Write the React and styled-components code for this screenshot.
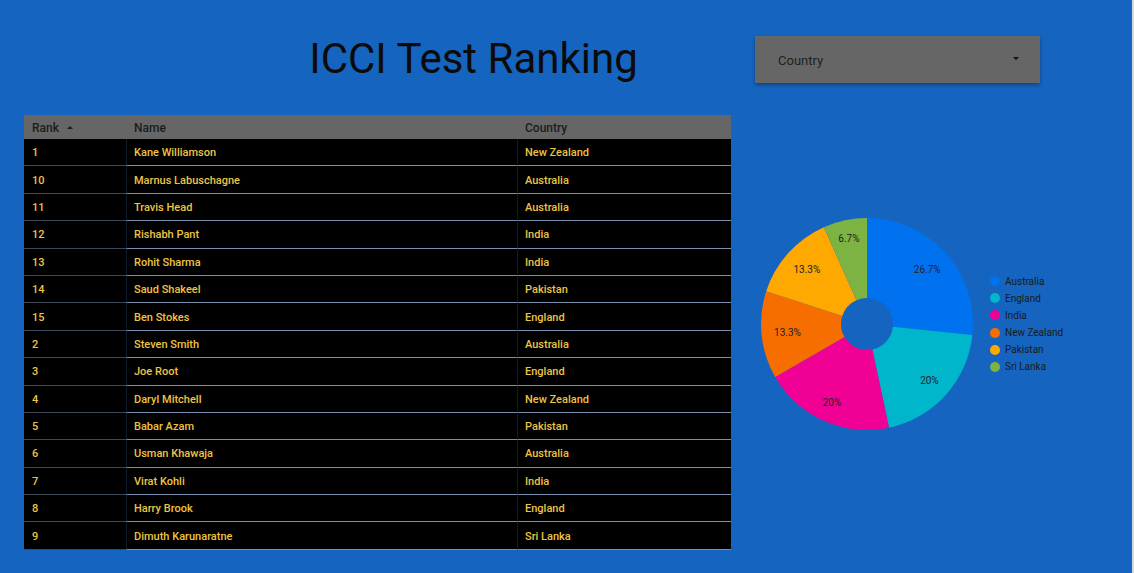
import React from 'react';
import styled, { createGlobalStyle } from 'styled-components';

const GlobalStyle = createGlobalStyle`
  html, body {
    margin: 0;
    padding: 0;
    background: #1565c0;
    font-family: Roboto, "Liberation Sans", sans-serif;
  }
`;

const Page = styled.div`
  display: flex;
  height: 573px;
  padding-left: 24px;
  box-sizing: border-box;
  background: #1565c0;
  border-right: 2px solid #d5d9df;
  overflow: hidden;
`;

const LeftColumn = styled.div`
  width: 707px;
  display: flex;
  flex-direction: column;
`;

const Title = styled.h1`
  margin: 0;
  height: 115px;
  box-sizing: border-box;
  padding: 33px 0 0 192px;
  text-align: center;
  font-size: 42px;
  line-height: 52px;
  font-weight: 400;
  color: #0b0b0b;
`;

const Table = styled.div`
  display: grid;
  grid-template-columns: 102px 391px 214px;
`;

const HeadCell = styled.div`
  height: 24px;
  box-sizing: border-box;
  padding: 1px 0 0 8px;
  background: #666666;
  color: #1c1c1c;
  font-size: 12px;
  font-weight: 500;
  display: flex;
  align-items: center;
  gap: 8px;
`;

const SortArrow = styled.span`
  width: 0;
  height: 0;
  border-left: 3px solid transparent;
  border-right: 3px solid transparent;
  border-bottom: 3px solid #1c1c1c;
  margin-top: -1px;
`;

const Cell = styled.div`
  height: 27.4px;
  box-sizing: border-box;
  background: #000;
  color: #eec443;
  font-size: 11px;
  font-weight: 500;
  padding: 1px 0 0 ${(p) => (p.$first ? '8px' : '7px')};
  display: flex;
  align-items: center;
  border-bottom: 1px solid ${(p) => (p.$first ? '#3e4a59' : '#7b90ad')};
  border-left: ${(p) => (p.$first ? 'none' : '1px solid #0f1b2b')};
`;

const RightColumn = styled.div`
  display: flex;
  flex-direction: column;
  padding-left: 24px;
`;

const Dropdown = styled.div`
  margin-top: 36px;
  width: 285px;
  height: 47px;
  background: #666666;
  box-shadow: 0 2px 4px rgba(0, 0, 0, 0.35);
  display: flex;
  align-items: center;
  justify-content: space-between;
  padding: 2px 23px 0;
  box-sizing: border-box;
  font-size: 13px;
  color: #222;
`;

const Caret = styled.span`
  width: 0;
  height: 0;
  border-left: 3px solid transparent;
  border-right: 3px solid transparent;
  border-top: 3px solid #111;
  margin-right: -2px;
  margin-top: -4px;
`;

const ChartRow = styled.div`
  margin-top: 133px;
  margin-left: 4px;
  display: flex;
  align-items: center;
  gap: 15px;
`;

const Legend = styled.ul`
  list-style: none;
  margin: 0;
  padding: 0;
  display: flex;
  flex-direction: column;
`;

const LegendItem = styled.li`
  height: 17.2px;
  display: flex;
  align-items: center;
  gap: 5px;
  font-size: 10px;
  color: #1a1a1a;
`;

const Dot = styled.span`
  width: 10px;
  height: 10px;
  border-radius: 50%;
  background: ${(p) => p.$color};
`;

const players = [
  ['1', 'Kane Williamson', 'New Zealand'],
  ['10', 'Marnus Labuschagne', 'Australia'],
  ['11', 'Travis Head', 'Australia'],
  ['12', 'Rishabh Pant', 'India'],
  ['13', 'Rohit Sharma', 'India'],
  ['14', 'Saud Shakeel', 'Pakistan'],
  ['15', 'Ben Stokes', 'England'],
  ['2', 'Steven Smith', 'Australia'],
  ['3', 'Joe Root', 'England'],
  ['4', 'Daryl Mitchell', 'New Zealand'],
  ['5', 'Babar Azam', 'Pakistan'],
  ['6', 'Usman Khawaja', 'Australia'],
  ['7', 'Virat Kohli', 'India'],
  ['8', 'Harry Brook', 'England'],
  ['9', 'Dimuth Karunaratne', 'Sri Lanka'],
];

// labelR: distance of the percentage label from the centre
const slices = [
  { name: 'Australia', value: 4, label: '26.7%', color: '#0072f0', labelR: 81 },
  { name: 'England', value: 3, label: '20%', color: '#00b6cb', labelR: 84 },
  { name: 'India', value: 3, label: '20%', color: '#f10096', labelR: 86 },
  { name: 'New Zealand', value: 2, label: '13.3%', color: '#f66d00', labelR: 80 },
  { name: 'Pakistan', value: 2, label: '13.3%', color: '#ffa800', labelR: 81 },
  { name: 'Sri Lanka', value: 1, label: '6.7%', color: '#7cb342', labelR: 87 },
];

const Pie = () => {
  const cx = 108, cy = 108, R = 106, r = 26;
  const total = slices.reduce((s, x) => s + x.value, 0);
  const pt = (a, rad) => [cx + rad * Math.sin(a), cy - rad * Math.cos(a)];
  let start = 0;
  return (
    <svg width="216" height="216" viewBox="0 0 216 216">
      {slices.map((s) => {
        const end = start + (s.value / total) * Math.PI * 2;
        const large = end - start > Math.PI ? 1 : 0;
        const [x1, y1] = pt(start, R);
        const [x2, y2] = pt(end, R);
        const [x3, y3] = pt(end, r);
        const [x4, y4] = pt(start, r);
        const mid = (start + end) / 2;
        const [lx, ly] = pt(mid, s.labelR);
        start = end;
        return (
          <g key={s.name}>
            <path
              d={`M${x1} ${y1} A${R} ${R} 0 ${large} 1 ${x2} ${y2} L${x3} ${y3} A${r} ${r} 0 ${large} 0 ${x4} ${y4} Z`}
              fill={s.color}
            />
            <text x={lx} y={ly + 3.5} textAnchor="middle" fontSize="10" fill="#222"
              fontFamily="Roboto, sans-serif">
              {s.label}
            </text>
          </g>
        );
      })}
    </svg>
  );
};

export default function App() {
  return (
    <>
      <GlobalStyle />
      <Page>
        <LeftColumn>
          <Title>ICCI Test Ranking</Title>
          <Table>
            <HeadCell>Rank <SortArrow /></HeadCell>
            <HeadCell>Name</HeadCell>
            <HeadCell>Country</HeadCell>
            {players.map(([rank, name, country]) => (
              <React.Fragment key={rank}>
                <Cell $first>{rank}</Cell>
                <Cell>{name}</Cell>
                <Cell>{country}</Cell>
              </React.Fragment>
            ))}
          </Table>
        </LeftColumn>
        <RightColumn>
          <Dropdown>
            Country
            <Caret />
          </Dropdown>
          <ChartRow>
            <Pie />
            <Legend>
              {slices.map((s) => (
                <LegendItem key={s.name}>
                  <Dot $color={s.color} />
                  {s.name}
                </LegendItem>
              ))}
            </Legend>
          </ChartRow>
        </RightColumn>
      </Page>
    </>
  );
}
